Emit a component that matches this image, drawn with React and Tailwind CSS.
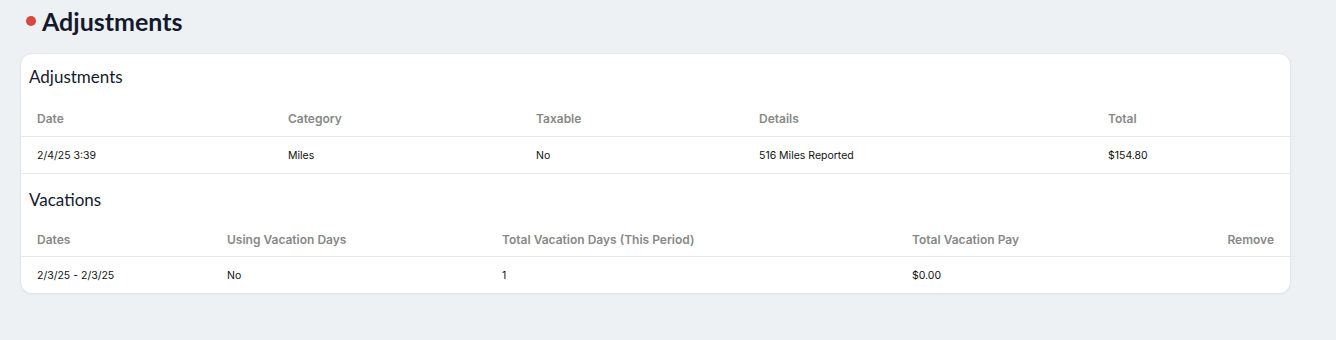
export default function App() {
  const adjustments = [
    { date: "2/4/25 3:39", category: "Miles", taxable: "No", details: "516 Miles Reported", total: "$154.80" },
  ];
  const vacations = [
    { dates: "2/3/25 - 2/3/25", using: "No", days: "1", pay: "$0.00" },
  ];

  const th = "h-9 px-4 pt-[3px] text-left align-middle text-[12px] font-semibold text-[#888]";
  const td = "h-[37px] px-4 pt-[2px] align-middle text-[10.5px] text-[#111]";
  const tdLast = "h-9 px-4 pt-[3px] align-middle text-[10.5px] text-[#111]";

  return (
    <div className="min-h-screen bg-[#eef1f4] px-[20px] pt-[6px] font-['Inter',sans-serif]">
      <div className="flex items-center gap-[6px] pl-[6px]">
        <span className="w-[10px] h-[10px] rounded-full bg-[#d9473f]" />
        <h1 className="text-[25px] leading-[30px] font-bold text-[#141a2e] font-['Lato',sans-serif]">
          Adjustments
        </h1>
      </div>

      <div className="mt-[17px] w-[1271px] rounded-xl border border-[#e3e6ea] bg-white overflow-hidden shadow-[0_1px_2px_rgba(0,0,0,0.04)]">
        <div className="pt-[11px]">
          <h2 className="px-2 text-[17px] leading-6 text-[#141a2e] font-['Lato',sans-serif]">Adjustments</h2>
          <table className="mt-[11px] w-full table-fixed border-collapse">
            <colgroup>
              <col className="w-[251px]" />
              <col className="w-[248px]" />
              <col className="w-[223px]" />
              <col className="w-[349px]" />
              <col />
            </colgroup>
            <thead>
              <tr className="border-b border-[#e8e8e8]">
                <th className={th}>Date</th>
                <th className={th}>Category</th>
                <th className={th}>Taxable</th>
                <th className={th}>Details</th>
                <th className={th}>Total</th>
              </tr>
            </thead>
            <tbody>
              {adjustments.map((a, i) => (
                <tr key={i} className="border-b border-[#e8e8e8]">
                  <td className={td}>{a.date}</td>
                  <td className={td}>{a.category}</td>
                  <td className={td}>{a.taxable}</td>
                  <td className={td}>{a.details}</td>
                  <td className={td}>{a.total}</td>
                </tr>
              ))}
            </tbody>
          </table>
        </div>

        <div className="pt-[14px]">
          <h2 className="px-2 text-[17px] leading-6 text-[#141a2e] font-['Lato',sans-serif]">Vacations</h2>
          <table className="mt-[9px] w-full table-fixed border-collapse">
            <colgroup>
              <col className="w-[190px]" />
              <col className="w-[275px]" />
              <col className="w-[410px]" />
              <col className="w-[260px]" />
              <col />
            </colgroup>
            <thead>
              <tr className="border-b border-[#e8e8e8]">
                <th className={th}>Dates</th>
                <th className={th}>Using Vacation Days</th>
                <th className={th}>Total Vacation Days (This Period)</th>
                <th className={th}>Total Vacation Pay</th>
                <th className={th + " !text-right"}>Remove</th>
              </tr>
            </thead>
            <tbody>
              {vacations.map((v, i) => (
                <tr key={i}>
                  <td className={tdLast}>{v.dates}</td>
                  <td className={tdLast}>{v.using}</td>
                  <td className={tdLast}>{v.days}</td>
                  <td className={tdLast}>{v.pay}</td>
                  <td className={tdLast}></td>
                </tr>
              ))}
            </tbody>
          </table>
        </div>
      </div>
    </div>
  );
}
